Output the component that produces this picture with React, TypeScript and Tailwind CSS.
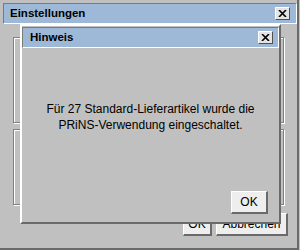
import React from "react";

function CloseButton() {
  return (
    <div className="w-[15px] h-[13px] bg-[#e4e4e4] border-t border-l border-white border-r border-b border-r-[#505050] border-b-[#505050] grid place-items-center">
      <svg width="9" height="7" viewBox="0 0 9 7">
        <path d="M1 0 L8 7 M8 0 L1 7" stroke="#000" strokeWidth="1.6" />
      </svg>
    </div>
  );
}

function TitleBar({ title, inner = false }: { title: string; inner?: boolean }) {
  return (
    <div
      className={
        "h-[21px] shrink-0 bg-[#9db9d7] border-t border-l border-[#7a7a7a] border-b border-r border-b-white border-r-white flex items-center justify-between " +
        (inner ? "pl-[7px] pr-[5px]" : "pl-[6px] pr-[6px]")
      }
    >
      <span className="text-[11.5px] font-bold text-black leading-none">{title}</span>
      <CloseButton />
    </div>
  );
}

function Button({ label, className }: { label: string; className?: string }) {
  return (
    <div
      className={
        "h-[23px] bg-[#eeeeee] border-t border-l border-white border-r-2 border-b-2 border-r-[#6a6a6a] border-b-[#6a6a6a] grid place-items-center text-[12px] text-black leading-none " +
        (className ?? "")
      }
    >
      {label}
    </div>
  );
}

function Group({ h }: { h: string }) {
  return (
    <div
      className={
        "w-[271px] border border-[#808080] shadow-[inset_1px_1px_0_#ffffff,1px_1px_0_#ffffff] " + h
      }
    />
  );
}

export default function App() {
  return (
    <div
      className="relative w-[300px] h-[250px] bg-[#c0c0c0] overflow-hidden"
      style={{ fontFamily: '"Liberation Sans", Arial, sans-serif' }}
    >
      {/* Einstellungen window */}
      <div className="w-[299px] h-[250px] border-r-2 border-b-2 border-[#6a6a6a] pt-[3px] pl-[3px] flex flex-col">
        <TitleBar title="Einstellungen" />
        <div className="pl-[10px] flex flex-col">
          <div className="mt-[13px]">
            <Group h="h-[86px]" />
          </div>
          <div className="mt-[6px]">
            <Group h="h-[76px]" />
          </div>
          <div className="mt-[8px] flex justify-end gap-[4px] pr-[9px]">
            <Button label="OK" className="w-[29px]" />
            <Button label="Abbrechen" className="w-[72px]" />
          </div>
        </div>
      </div>

      {/* Hinweis dialog */}
      <div className="absolute left-[20px] top-[24px] w-[261px] h-[200px] bg-[#c0c0c0] border-t-2 border-l-2 border-white border-r-2 border-b-2 border-r-[#6a6a6a] border-b-[#6a6a6a] pt-[1px] flex flex-col">
        <TitleBar title="Hinweis" inner />
        <div className="flex-1 flex flex-col">
          <p className="mt-[53px] text-center text-[12px] leading-[16px] text-black">
            Für 27 Standard-Lieferartikel wurde die
            <br />
            PRiNS-Verwendung eingeschaltet.
          </p>
          <div className="mt-auto mb-[8px] mr-[11px] flex justify-end">
            <Button label="OK" className="w-[37px]" />
          </div>
        </div>
      </div>
    </div>
  );
}
